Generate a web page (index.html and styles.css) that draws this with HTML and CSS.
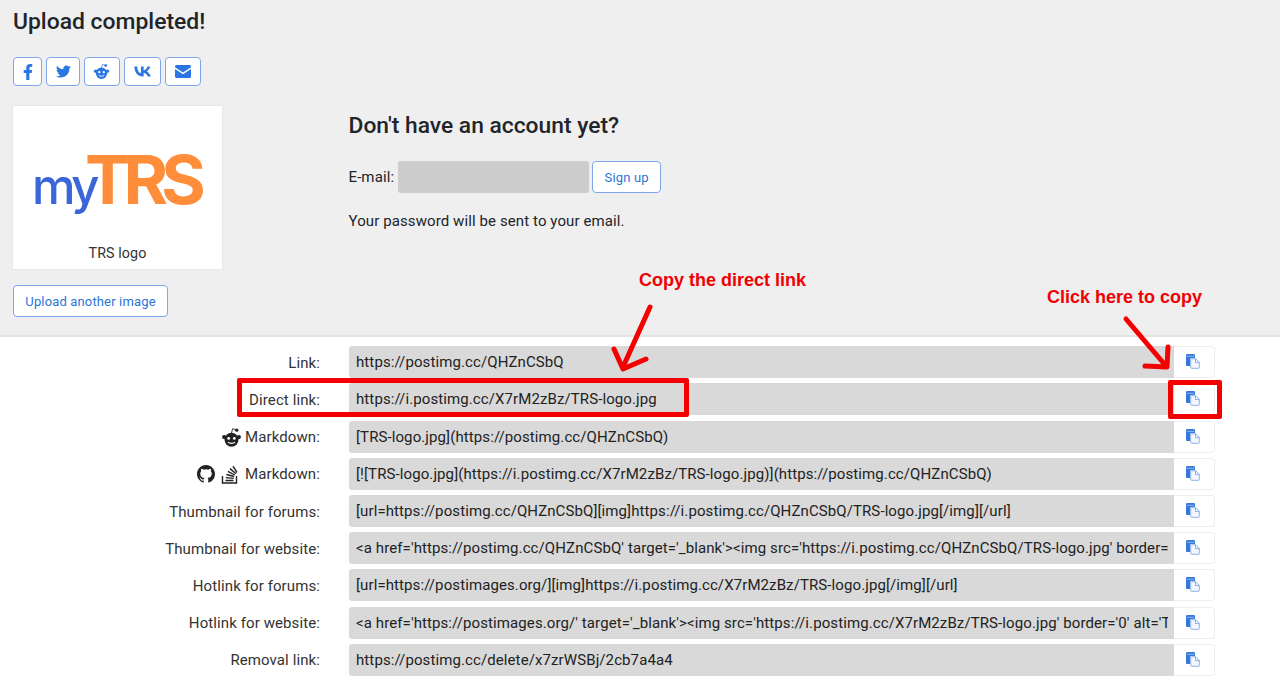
FILE: index.html
```html
<!DOCTYPE html>
<html lang="en">
<head>
<meta charset="utf-8">
<title>Upload completed!</title>
<link rel="stylesheet" href="styles.css">
</head>
<body>
<section class="top">
  <h1 class="title">Upload completed!</h1>
  <div class="share">
    <a class="sbtn s-fb"><svg viewBox="0 0 320 512" width="10" height="16"><path d="M279 288l14-93h-89v-60c0-25 12-50 52-50h41V6s-37-6-72-6c-73 0-121 44-121 125v70H23v93h81v224h100V288z"/></svg></a>
    <a class="sbtn s-tw"><svg viewBox="0 0 512 512" width="15" height="15"><path d="M459 152c0 5 0 9 0 14 0 139-106 299-299 299-59 0-115-17-161-47 8 1 16 1 25 1 49 0 94-17 130-45-46-1-85-31-98-73 6 1 13 2 20 2 9 0 19-1 28-4-48-10-84-52-84-103v-1c14 8 30 13 47 13-28-19-47-51-47-87 0-19 5-37 14-53 52 64 129 105 216 110-2-8-3-16-3-24 0-58 47-105 105-105 30 0 58 13 77 33 24-5 47-14 67-26-8 25-24 46-46 59 21-2 42-8 60-16-14 21-32 39-51 53z"/></svg></a>
    <a class="sbtn s-rd"><svg viewBox="0 0 24 24" width="17" height="17"><circle cx="12" cy="14.5" r="8"/><circle cx="3.6" cy="11.5" r="2.4"/><circle cx="20.4" cy="11.5" r="2.4"/><circle cx="18" cy="3.6" r="1.9"/><path d="M12 7l1.2-5 4 1" fill="none" stroke="#2c75e4" stroke-width="1"/><circle cx="8.8" cy="13" r="1.6" fill="#fff"/><circle cx="15.2" cy="13" r="1.6" fill="#fff"/><path d="M8 17.2c2 2 6 2 8 0" fill="none" stroke="#fff" stroke-width="1.3"/></svg></a>
    <a class="sbtn s-vk"><svg viewBox="0 0 24 14" width="17" height="11"><path d="M13 14C5 14 .8 8.700 .5 0h4c.2 6.400 3 9 5.300 9.600V0h3.800v5.500c2.200-.2 4.600-2.700 5.400-5.500h3.800c-.6 3.400-3.100 5.900-4.900 7 1.800.8 4.600 3 5.700 7h-4.200c-.9-2.800-3.100-4.900-5.800-5.200V14z"/></svg></a>
    <a class="sbtn s-ml"><svg viewBox="0 0 16 13" width="16" height="13"><path d="M0 1.500C0 .7.700 0 1.500 0h13c.8 0 1.500.7 1.500 1.500v.7L8 7.500 0 2.200zM0 4l8 5.200L16 4v7.500c0 .8-.7 1.500-1.500 1.500h-13C.7 13 0 12.300 0 11.500z"/></svg></a>
  </div>
  <div class="columns">
    <div class="left">
      <figure class="thumb">
        <div class="logo"><span class="logo-my">my</span><span class="logo-trs">TRS</span></div>
        <figcaption class="caption">TRS logo</figcaption>
      </figure>
      <a class="btn upload">Upload another image</a>
    </div>
    <div class="signup">
      <h2 class="subtitle">Don't have an account yet?</h2>
      <div class="email-row">
        <span>E-mail:</span>
        <span class="email-input"></span>
        <a class="btn signup-btn">Sign up</a>
      </div>
      <p class="note">Your password will be sent to your email.</p>
    </div>
  </div>
</section>

<section class="links">
  <div class="row"><label class="lbl">Link:</label><div class="field">https://postimg.cc/QHZnCSbQ</div><button class="copy"><svg class="cp" viewBox="0 0 14 15" width="14" height="15"><use href="#copyicon"/></svg></button></div>
  <div class="row"><label class="lbl">Direct link:</label><div class="field">https://i.postimg.cc/X7rM2zBz/TRS-logo.jpg</div><button class="copy"><svg class="cp" viewBox="0 0 14 15" width="14" height="15"><use href="#copyicon"/></svg></button></div>
  <div class="row"><label class="lbl"><svg class="ico-rd" viewBox="0 0 24 24" width="21" height="21"><circle cx="12" cy="14.500" r="8"/><circle cx="3.600" cy="11.500" r="2.400"/><circle cx="20.400" cy="11.500" r="2.400"/><circle cx="18" cy="3.600" r="1.900"/><path d="M12 7l1.200-5 4 1" fill="none" stroke="#222" stroke-width="1"/><circle cx="8.800" cy="13" r="1.600" fill="#fff"/><circle cx="15.200" cy="13" r="1.600" fill="#fff"/><path d="M8 17.200c2 2 6 2 8 0" fill="none" stroke="#fff" stroke-width="1.300"/></svg>Markdown:</label><div class="field">[TRS-logo.jpg](https://postimg.cc/QHZnCSbQ)</div><button class="copy"><svg class="cp" viewBox="0 0 14 15" width="14" height="15"><use href="#copyicon"/></svg></button></div>
  <div class="row"><label class="lbl"><svg class="ico-gh" viewBox="0 0 16 16" width="18" height="18"><path d="M8 0C3.580 0 0 3.580 0 8c0 3.540 2.290 6.530 5.470 7.590.4.070.55-.17.55-.38v-1.340c-2.230.48-2.700-1.070-2.700-1.070-.36-.92-.89-1.170-.89-1.170-.73-.5.050-.49.050-.49.800.060 1.230.830 1.230.830.710 1.220 1.870.870 2.330.660.070-.520.280-.870.510-1.070-1.780-.200-3.640-.890-3.640-3.950 0-.870.310-1.590.820-2.150-.080-.200-.360-1.020.080-2.120 0 0 .670-.210 2.200.820a7.600 7.600 0 0 1 4 0c1.530-1.040 2.200-.820 2.200-.820.440 1.100.160 1.920.080 2.120.510.560.820 1.270.820 2.150 0 3.070-1.870 3.750-3.650 3.950.290.250.540.730.540 1.480v2.190c0 .210.150.460.550.380A8 8 0 0 0 16 8c0-4.420-3.580-8-8-8z"/></svg><svg class="ico-so" viewBox="0 0 18 20" width="18" height="20"><path d="M1.500 12v7h14v-7" fill="none" stroke="#222" stroke-width="1.400"/><path d="M4.500 16.500h8M4.700 13.600l8 .8M5.400 10.500l7.700 2M6.800 7.400l7 3.600M9 4.600l6 5.200M12 2.200l4 6.300" fill="none" stroke="#222" stroke-width="1.400"/></svg>Markdown:</label><div class="field">[![TRS-logo.jpg](https://i.postimg.cc/X7rM2zBz/TRS-logo.jpg)](https://postimg.cc/QHZnCSbQ)</div><button class="copy"><svg class="cp" viewBox="0 0 14 15" width="14" height="15"><use href="#copyicon"/></svg></button></div>
  <div class="row"><label class="lbl">Thumbnail for forums:</label><div class="field">[url=https://postimg.cc/QHZnCSbQ][img]https://i.postimg.cc/QHZnCSbQ/TRS-logo.jpg[/img][/url]</div><button class="copy"><svg class="cp" viewBox="0 0 14 15" width="14" height="15"><use href="#copyicon"/></svg></button></div>
  <div class="row"><label class="lbl">Thumbnail for website:</label><div class="field">&lt;a href='https://postimg.cc/QHZnCSbQ' target='_blank'&gt;&lt;img src='https://i.postimg.cc/QHZnCSbQ/TRS-logo.jpg' border='0' alt='TRS-logo'/&gt;&lt;/a&gt;</div><button class="copy"><svg class="cp" viewBox="0 0 14 15" width="14" height="15"><use href="#copyicon"/></svg></button></div>
  <div class="row"><label class="lbl">Hotlink for forums:</label><div class="field">[url=https://postimages.org/][img]https://i.postimg.cc/X7rM2zBz/TRS-logo.jpg[/img][/url]</div><button class="copy"><svg class="cp" viewBox="0 0 14 15" width="14" height="15"><use href="#copyicon"/></svg></button></div>
  <div class="row"><label class="lbl">Hotlink for website:</label><div class="field">&lt;a href='https://postimages.org/' target='_blank'&gt;&lt;img src='https://i.postimg.cc/X7rM2zBz/TRS-logo.jpg' border='0' alt='TRS-logo'/&gt;&lt;/a&gt;</div><button class="copy"><svg class="cp" viewBox="0 0 14 15" width="14" height="15"><use href="#copyicon"/></svg></button></div>
  <div class="row"><label class="lbl">Removal link:</label><div class="field">https://postimg.cc/delete/x7zrWSBj/2cb7a4a4</div><button class="copy"><svg class="cp" viewBox="0 0 14 15" width="14" height="15"><use href="#copyicon"/></svg></button></div>
</section>

<svg class="defs" width="0" height="0"><defs><g id="copyicon"><path d="M0 1.300C0 .6.600 0 1.300 0h6.400C8.400 0 9 .6 9 1.300V4H5.500C4.700 4 4 4.700 4 5.500V12H1.300C.6 12 0 11.400 0 10.700z" fill="#3478dc"/><path d="M.8 2.300h7.400" fill="none" stroke="#a9c6f0" stroke-width=".8"/><path d="M5.500 4.800h4.200l3.600 3.600v5.100c0 .5-.3.800-.8.800h-7c-.5 0-.8-.3-.8-.8V5.600c0-.5.300-.8.800-.8z" fill="#f4f8fe" stroke="#7fa8ea" stroke-width=".9"/><path d="M9.500 4.800v3.800h3.800" fill="none" stroke="#7fa8ea" stroke-width=".9"/></g></defs></svg>

<div class="note-a">Copy the direct link</div>
<div class="note-b">Click here to copy</div>
<div class="box box-a"></div>
<div class="box box-b"></div>
<svg class="arrows" width="1280" height="690" viewBox="0 0 1280 690">
  <path d="M650 307L623 367M614 349L623 369L646 359" fill="none" stroke="#f40000" stroke-width="5" stroke-linecap="round" stroke-linejoin="round"/>
  <path d="M1126 319L1166 366M1168 347L1167 367L1145 366" fill="none" stroke="#f40000" stroke-width="5" stroke-linecap="round" stroke-linejoin="round"/>
</svg>
</body>
</html>
```
FILE: styles.css
```css
* { box-sizing: border-box; }
html, body { margin: 0; padding: 0; }
body {
  position: relative;
  height: 690px;
  overflow: hidden;
  background: #fff;
  color: #212529;
  font-family: Roboto, "Liberation Sans", sans-serif;
  font-size: 15px;
  letter-spacing: .1px;
}
.top {
  height: 337px;
  padding: 8px 13px 0;
  background: #efeff0;
  border-bottom: 2px solid #e4e4e4;
}
.title {
  margin: 0;
  font-size: 22.900px;
  line-height: 27px;
  font-weight: 500;
  letter-spacing: 0;
}
.share {
  display: flex;
  gap: 4px;
  margin-top: 22px;
}
.sbtn {
  display: flex;
  align-items: center;
  justify-content: center;
  height: 29px;
  background: #fff;
  border: 1px solid #7ea6ea;
  border-radius: 4px;
}
.sbtn svg { fill: #2c75e4; display: block; }
.s-fb { width: 29px; }
.s-tw { width: 34px; }
.s-rd { width: 35.500px; }
.s-vk { width: 37px; }
.s-ml { width: 36px; }
.columns {
  display: flex;
  margin-top: 20px;
}
.left { width: 335.500px; }
.thumb {
  width: 209px;
  height: 163px;
  margin: 0;
  background: #fff;
  box-shadow: 0 0 2px #d8d8d8;
  display: flex;
  flex-direction: column;
  align-items: center;
}
.logo {
  display: flex;
  align-items: baseline;
  margin-top: 38px;
  height: 70px;
  font-family: Inter, "Liberation Sans", sans-serif;
  line-height: 70px;
}
.logo-my {
  color: #3b66d9;
  font-size: 49px;
  font-weight: 500;
  letter-spacing: -3.500px;
}
.logo-trs {
  margin-left: -11px;
  margin-right: 4px;
  color: #ff8d3a;
  font-size: 68px;
  font-weight: 700;
  letter-spacing: -6.800px;
}
.caption {
  margin-top: 29px;
  color: #333;
  font-size: 14.300px;
  line-height: 20px;
}
.btn {
  display: inline-flex;
  align-items: center;
  justify-content: center;
  background: #fff;
  color: #2c75d8;
  border: 1px solid #7ea6ea;
  border-radius: 4px;
  font-size: 13px;
  letter-spacing: .15px;
}
.upload {
  width: 155px;
  height: 32px;
  margin-top: 16px;
}
.subtitle {
  margin: 6px 0 0;
  font-size: 22.800px;
  line-height: 28px;
  font-weight: 500;
  letter-spacing: 0;
}
.email-row {
  display: flex;
  align-items: center;
  margin-top: 21px;
}
.email-input {
  width: 191px;
  height: 32px;
  margin-left: 4px;
  background: #cdcdcd;
  border-radius: 3px;
}
.signup-btn {
  width: 69px;
  height: 32px;
  margin-left: 3px;
}
.note {
  margin: 18px 0 0;
  line-height: 20px;
}
.links {
  display: flex;
  flex-direction: column;
  gap: 5.200px;
  padding-top: 9.300px;
}
.row {
  display: flex;
  align-items: stretch;
  height: 32px;
}
.lbl {
  display: flex;
  align-items: center;
  justify-content: flex-end;
  width: 320px;
  margin-right: 28.500px;
  padding-top: 1px;
  color: #333;
}
.field {
  flex: 0 0 825.500px;
  width: 825.500px;
  padding: 0 0 0 7.500px;
  border-right: 6px solid #d9d9d9;
  overflow: hidden;
  white-space: nowrap;
  line-height: 33px;
  background: #d9d9d9;
  border-radius: 3px 0 0 3px;
  color: #222;
}
.copy {
  display: flex;
  align-items: center;
  justify-content: center;
  width: 41px;
  padding: 0 3px 1px 0;
  background: #fff;
  border: 1px solid #eee;
  border-left: 0;
  border-radius: 0 4px 4px 0;
}
.cp { display: block; }
.ico-rd { fill: #222; margin-right: 3px; }
.ico-gh { fill: #222; margin-right: 6px; }
.ico-so { margin-right: 6px; }
.defs { position: absolute; }
.note-a, .note-b {
  position: absolute;
  color: #f00000;
  font-family: "Liberation Sans", Arial, sans-serif;
  font-weight: 700;
  font-size: 18px;
  line-height: 20px;
  letter-spacing: 0;
  white-space: nowrap;
}
.note-a { left: 639px; top: 270px; }
.note-b { left: 1047px; top: 287px; }
.box {
  position: absolute;
  border: 5px solid #f40000;
  border-radius: 2px;
}
.box-a { left: 237px; top: 378px; width: 452px; height: 39px; }
.box-b { left: 1168px; top: 380px; width: 54px; height: 39px; }
.arrows { position: absolute; left: 0; top: 0; pointer-events: none; }
```
